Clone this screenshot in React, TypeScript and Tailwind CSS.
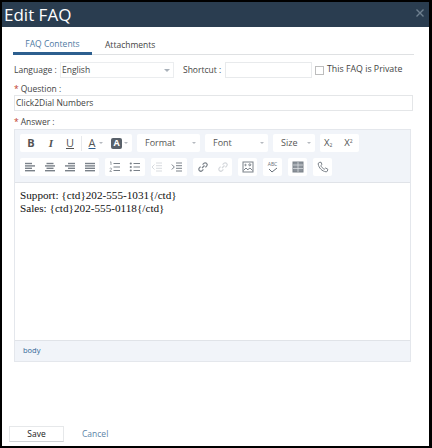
import { ReactNode } from "react";

const Btn = ({ children, className = "" }: { children: ReactNode; className?: string }) => (
  <div className={`h-[18px] bg-white rounded-[2px] flex items-center ${className}`}>{children}</div>
);

const Ic = ({ children, color = "#7a8189" }: { children: ReactNode; color?: string }) => (
  <svg viewBox="0 0 12 12" className="w-3 h-3 shrink-0" fill="none" stroke={color} strokeWidth="1">
    {children}
  </svg>
);

// justify icons: four thick rows, the odd ones shorter depending on alignment
const Lines = ({ rows }: { rows: [number, number][] }) => (
  <Ic>
    {rows.map(([a, b], i) => (
      <path key={i} d={`M${a} ${2.5 + i * 2.4}H${b}`} strokeWidth="1.4" />
    ))}
  </Ic>
);

const Caret = ({ className = "" }: { className?: string }) => (
  <span className={`w-0 h-0 border-x-[2px] border-x-transparent border-t-[2px] border-t-[#b5b9bf] ${className}`} />
);

const Combo = ({ label, w }: { label: string; w: string }) => (
  <Btn className={`${w} justify-between pl-2 pr-[4px] text-[9px] text-[#555]`}>
    <span>{label}</span>
    <Caret />
  </Btn>
);

const Indent = ({ color, d }: { color: string; d: string }) => (
  <Ic color={color}>
    <path d="M5 2H11M5 4.7H11M5 7.3H11M5 10H11" />
    <path d={d} />
  </Ic>
);

const LINK = "M5 7L7.5 4.5M3.6 5.6L2.4 6.8a1.9 1.9 0 0 0 2.8 2.8L6.4 8.4M5.6 3.6L6.8 2.4a1.9 1.9 0 0 1 2.8 2.8L8.4 6.4";

export default function App() {
  return (
    <div className="w-[432px] h-[448px] bg-black pt-[2px] pb-[2px] pl-[2px] pr-[3px] font-['Open_Sans',sans-serif] overflow-hidden">
      <div className="w-full h-full bg-white flex flex-col">
        <div className="h-[25px] bg-[#2a3d50] flex items-center justify-between pl-[2px] pr-[5px] shrink-0">
          <span className="text-white text-[17px] leading-none">Edit FAQ</span>
          <svg viewBox="0 0 8 8" className="w-2 h-2 mb-[3px]" stroke="#6f8090" strokeWidth="1.4">
            <path d="M0.5 0.5L7.5 7.5M7.5 0.5L0.5 7.5" />
          </svg>
        </div>

        <div className="flex flex-col px-3 flex-1">
          <div className="flex h-[28px] items-end border-b border-[#dfe1e3] mr-[3px] text-[8.5px] text-[#444]">
            <div className="w-[79px] h-[27px] -ml-px flex items-center justify-center pt-[9px] border-b-[3px] border-[#2d5f8f] text-[#4f7aa3] -mb-px">
              FAQ Contents
            </div>
            <div className="h-[27px] flex items-center pt-[9px] pl-[13px]">Attachments</div>
          </div>

          <div className="flex items-center h-[16px] mt-[7px] text-[8.5px] text-[#444]">
            <span className="w-[46px]">Language :</span>
            <div className="w-[114px] h-[16px] border border-[#ebedef] flex items-center justify-between pl-px pr-[3px]">
              <span>English</span>
              <span className="w-0 h-0 border-x-[3px] border-x-transparent border-t-[3px] border-t-[#a9b1ba]" />
            </div>
            <span className="ml-[9px] w-[42px]">Shortcut :</span>
            <div className="w-[87px] h-[16px] border border-[#e8eaec]" />
            <div className="ml-[3px] w-[9px] h-[9px] border border-[#bdbdbd]" />
            <span className="ml-[3px] text-[8.8px]">This FAQ is Private</span>
          </div>

          <div className="mt-[5px] h-[12px] flex items-center text-[8.5px] text-[#444]">
            <span className="text-[#c0392b] mr-[2px]">*</span>Question :
          </div>
          <div className="w-[399px] h-[16px] border border-[#e4e6e8] flex items-center pl-px text-[8.5px] text-[#444]">
            Click2Dial Numbers
          </div>

          <div className="mt-[5px] h-[12px] flex items-center text-[8.5px] text-[#444]">
            <span className="text-[#c0392b] mr-[2px]">*</span>Answer :
          </div>

          <div className="w-[397px] h-[233px] mt-px border border-[#e4e7ec] flex flex-col">
            <div className="h-[53px] bg-[#f1f4f9] border-b border-[#e0e3e8] pt-[4px] pl-[5px] flex flex-col gap-[6px] shrink-0">
              <div className="flex gap-[5px]">
                <Btn className="w-[112px] pl-[5px] text-[11px] text-[#555]">
                  <span className="w-[12px] text-center font-bold">B</span>
                  <span className="w-[12px] ml-[8px] text-center italic font-bold font-['Liberation_Serif',serif]">I</span>
                  <span className="w-[12px] ml-[7px] text-center underline">U</span>
                  <span className="w-px h-[15px] ml-[5px] bg-[#e7e9ec]" />
                  <span className="w-[12px] ml-[4px] text-center underline decoration-[#2d5f8f]">A</span>
                  <Caret className="ml-[1px]" />
                  <span className="w-[11px] h-[11px] ml-[8px] bg-[#59616a] rounded-[2px] text-white text-[9px] font-bold flex items-center justify-center">A</span>
                  <Caret className="ml-[2px]" />
                </Btn>
                <Combo label="Format" w="w-[63px]" />
                <Combo label="Font" w="w-[63px]" />
                <Combo label="Size" w="w-[42px]" />
                <Btn className="w-[39px] pl-[4px] gap-[12px] text-[9.5px] text-[#555]">
                  <span>X<sub className="text-[5px]">2</sub></span>
                  <span>X<sup className="text-[5px]">2</sup></span>
                </Btn>
              </div>
              <div className="flex gap-[6px]">
                <Btn className="w-[79px] pl-[4px] gap-[8px]">
                  <Lines rows={[[1, 8], [1, 11], [1, 8], [1, 11]]} />
                  <Lines rows={[[2.5, 9.5], [1, 11], [2.5, 9.5], [1, 11]]} />
                  <Lines rows={[[4, 11], [1, 11], [4, 11], [1, 11]]} />
                  <Lines rows={[[1, 11], [1, 11], [1, 11], [1, 11]]} />
                </Btn>
                <Btn className="w-[40px] pl-[4px] gap-[8px]">
                  <Ic>
                    <path d="M4.5 2.5H11M4.5 6H11M4.5 9.5H11" />
                    <path d="M1 1.2L2 0.8V4M0.8 7.5C1 6.8 2.6 6.8 2.6 7.8C2.6 8.6 1.2 9.4 0.8 10.4H2.9" strokeWidth="0.7" />
                  </Ic>
                  <Ic>
                    <path d="M4.5 2.5H11M4.5 6H11M4.5 9.5H11" />
                    <circle cx="1.8" cy="2.5" r="1.1" fill="#7a8189" stroke="none" />
                    <circle cx="1.8" cy="6" r="1.1" fill="#7a8189" stroke="none" />
                    <circle cx="1.8" cy="9.5" r="1.1" fill="#7a8189" stroke="none" />
                  </Ic>
                </Btn>
                <Btn className="w-[36px] gap-[8px]">
                  <Indent color="#d8dbdf" d="M3.5 3.5L1 6L3.5 8.5" />
                  <Indent color="#7a8189" d="M0.8 3.5L3.3 6L0.8 8.5" />
                </Btn>
                <Btn className="w-[39px] pl-[4px] gap-[8px]">
                  <Ic><path d={LINK} strokeWidth="1.2" /></Ic>
                  <Ic color="#d5d8dc"><path d={LINK} strokeWidth="1.2" /></Ic>
                </Btn>
                <Btn className="w-[19px] justify-center">
                  <Ic>
                    <rect x="1" y="1" width="10" height="10" />
                    <path d="M1.5 9.5L4 7L6 9M6 8.5L8 7L10.5 9.5" />
                    <circle cx="7.8" cy="3.8" r="1" />
                    <circle cx="3.5" cy="4" r="0.7" />
                  </Ic>
                </Btn>
                <Btn className="w-[19px] justify-center flex-col">
                  <span className="text-[5px] leading-[6px] text-[#67707a]">ABC</span>
                  <svg viewBox="0 0 10 6" className="w-[10px] h-[6px]" fill="none" stroke="#67707a">
                    <path d="M1 2L4 5L9 1" />
                  </svg>
                </Btn>
                <Btn className="w-[19px] justify-center">
                  <Ic>
                    <rect x="1" y="1" width="10" height="10" fill="#8b929a" />
                    <path d="M6 1V11M1 4H11M1 7.5H11" stroke="#e4e6e9" strokeWidth="0.7" />
                  </Ic>
                </Btn>
                <Btn className="w-[19px] justify-center">
                  <Ic>
                    <path d="M2.2 1.5L4 1.2L5 3.5L3.8 4.6C4.4 6 5.8 7.6 7.4 8.2L8.6 7L10.8 8.2L10.4 10C10.2 10.6 9.6 10.9 9 10.8C5 10.2 1.8 7 1.2 3C1.1 2.3 1.5 1.7 2.2 1.5Z" />
                  </Ic>
                </Btn>
              </div>
            </div>

            <div className="flex-1 pt-[6px] pl-[5px] font-['Liberation_Serif',serif] text-[11.2px] leading-[13px] text-[#111]">
              <p>Support: {"{ctd}"}202-555-1031{"{/ctd}"}</p>
              <p>Sales: {"{ctd}"}202-555-0118{"{/ctd}"}</p>
            </div>

            <div className="h-[21px] bg-[#f1f4f9] border-t border-[#e0e3e8] flex items-center pl-[8px] text-[7.5px] text-[#2f6496] shrink-0">
              body
            </div>
          </div>

          <div className="mt-auto mb-[4px] -ml-[5px] flex items-center">
            <div className="w-[55px] h-[16px] bg-white border border-[#e6e8ea] border-b-[#cfd2d5] flex items-center justify-center text-[8.5px] text-[#222]">
              Save
            </div>
            <span className="ml-[18px] text-[8.5px] text-[#5c84a8]">Cancel</span>
          </div>
        </div>
      </div>
    </div>
  );
}
